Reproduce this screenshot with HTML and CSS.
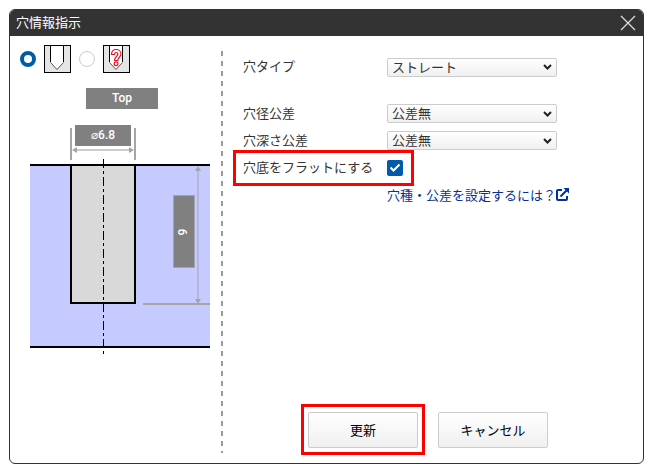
FILE: index.html
```html
<!doctype html>
<html lang="ja">
<head>
  <meta charset="UTF-8">
  <meta name="viewport" content="width=device-width, initial-scale=1.0">
  <title>穴情報指示</title>
  <link rel="stylesheet" href="styles.css">
</head>
<body>
  <div class="dialog" role="dialog" aria-labelledby="dialogTitle">
    <div class="titlebar">
      <span id="dialogTitle">穴情報指示</span>
      <button type="button" class="close" aria-label="閉じる">
        <svg width="16" height="16" viewBox="0 0 16 16"><path d="M1 1L15 15M15 1L1 15" stroke="#ddd" stroke-width="1.3" fill="none"/></svg>
      </button>
    </div>

    <div class="content">
      <div class="preview">
        <div class="shapes">
          <input type="radio" name="shape" id="shapeNormal" class="radio" checked>
          <label for="shapeNormal" aria-label="通常穴">
            <svg width="27" height="28" viewBox="0 0 27 28">
              <rect x="0.5" y="0.5" width="26" height="27" fill="#e5e5e5" stroke="#000"/>
              <path d="M6.5 1V18L13 24.5L19.5 18V1Z" fill="#fff"/>
              <path d="M6.5 1V17M19.5 1V17" stroke="#000" fill="none"/>
              <path d="M6.5 17.5L13 24.5L19.5 17.5" stroke="#555" fill="none"/>
            </svg>
          </label>
          <input type="radio" name="shape" id="shapeUnknown" class="radio">
          <label for="shapeUnknown" aria-label="不明な穴">
            <svg width="27" height="28" viewBox="0 0 27 28">
              <rect x="0.5" y="0.5" width="26" height="27" fill="#e5e5e5" stroke="#000"/>
              <path d="M6.5 1V18L13 24.5L19.5 18V1Z" fill="#fff"/>
              <path d="M6.5 1V17M19.5 1V17" stroke="#000" fill="none"/>
              <path d="M6.5 17.5L13 24.5L19.5 17.5" stroke="#555" fill="none"/>
              <path d="M8.5 9.5C8.500 6.500 10.500 4.500 13.200 4.500C16 4.500 18 6.500 18 9C18 12 14.800 12.500 14.800 15.500H11.500C11.500 11.800 14.800 11.500 14.800 9.200C14.800 6.800 11.500 7 11.500 9.500Z" fill="#fff" stroke="#f01020" stroke-width="1.2"/>
              <circle cx="13.1" cy="18.7" r="1.9" fill="#fff" stroke="#f01020" stroke-width="1.2"/>
            </svg>
          </label>
        </div>

        <svg class="drawing" width="180" height="266" viewBox="0 0 180 266">
          <!-- top label -->
          <rect x="56" y="0" width="72" height="21" fill="#808080"/>
          <text x="92" y="14" class="dim">Top</text>

          <!-- material and hole -->
          <rect x="0" y="77" width="180" height="182" fill="#c5cbff"/>
          <path d="M41 77V215H105V77" fill="#d9d9d9" stroke="#000" stroke-width="2"/>
          <path d="M0 77H180M0 259H180" stroke="#000" stroke-width="2"/>
          <path d="M73.5 71V266" stroke="#000" stroke-dasharray="9 3 3 3"/>

          <!-- diameter -->
          <path d="M41 40V72M105 40V72" stroke="#a5a5a5" stroke-width="2"/>
          <path d="M46 62H100" stroke="#ccc" stroke-width="2"/>
          <path d="M42 62L47 59V65ZM104 62L99 59V65Z" fill="#a5a5a5"/>
          <rect x="45" y="37" width="56" height="21" fill="#808080"/>
          <text x="73" y="51" class="dim">⌀6.8</text>

          <!-- depth -->
          <path d="M168 80V213" stroke="#b4b8d8" stroke-width="2"/>
          <path d="M168 78L165 83H171ZM168 216L165 211H171Z" fill="#a5a5a5"/>
          <path d="M113 216H180" stroke="#a5a5a5" stroke-width="2"/>
          <rect x="143.5" y="107.5" width="21" height="72" fill="#808080" stroke="#a0a2b8"/>
          <text x="-144" y="157" class="dim" transform="rotate(-90)">9</text>
        </svg>
      </div>

      <form class="settings">
        <div class="row row-type">
          <label for="holeType">穴タイプ</label>
          <select id="holeType"><option>ストレート</option></select>
        </div>
        <div class="row">
          <label for="diaTol">穴径公差</label>
          <select id="diaTol"><option>公差無</option></select>
        </div>
        <div class="row">
          <label for="depthTol">穴深さ公差</label>
          <select id="depthTol"><option>公差無</option></select>
        </div>
        <div class="row row-flat">
          <label for="flat">穴底をフラットにする</label>
          <input type="checkbox" id="flat" class="check" checked>
        </div>
        <div class="row row-help">
          <a href="#" class="help">穴種・公差を設定するには？<svg width="13" height="13" viewBox="0 0 13 13"><path d="M6 2H2Q1 2 1 3V11Q1 12 2 12H10Q11 12 11 11V8M4.500 8.500L10.500 2.500" fill="none" stroke="#003399" stroke-width="2"/><path d="M7.500 0H13V5.500Z" fill="#003399"/></svg></a>
        </div>

        <div class="buttons">
          <span class="marked"><button type="button" class="btn">更新</button></span>
          <button type="button" class="btn">キャンセル</button>
        </div>
      </form>
    </div>
  </div>
</body>
</html>
```

FILE: styles.css
```css
html, body{
  margin:0;
  padding:0;
}
body {
  display: flex;
  box-sizing: border-box;
  min-height: 100vh;
  padding: 9px 8px 5px 9px;
  background: #fff;
  color: #333;
  font-family: "Noto Sans CJK JP", sans-serif;
  font-size: 13px;
  line-height: 20px;
}
.dialog {
  flex: 1;
  display: flex;
  flex-direction: column;
  border: 1px solid #333;
  border-radius: 6px;
  overflow: hidden;
}
.titlebar {
  display: flex;
  align-items: center;
  justify-content: space-between;
  height: 26px;
  padding: 0 7px 0 6px;
  background: #333;
  color: #fff;
}
.titlebar span {
  padding-bottom: 2px;
}
.close {
  display: flex;
  padding: 0;
  border: 0;
  background: none;
}
.content {
  flex: 1;
  display: flex;
  padding: 9px 0 10px;
}

/* left side */
.preview {
  width: 211px;
  flex-shrink: 0;
}
.shapes {
  display: flex;
  align-items: center;
  gap: 8px;
  padding-left: 10px;
}
.shapes label {
  display: flex;
}
.radio {
  appearance: none;
  box-sizing: border-box;
  width: 16px;
  height: 16px;
  margin: 0;
  border: 1px solid #ccc;
  border-radius: 50%;
  background: #fff;
}
.radio:checked {
  border: 4px solid #005bac;
}
.drawing {
  display: block;
  margin: 15px 0 0 20px;
}
.dim {
  fill: #fff;
  font-family: Roboto, "DejaVu Sans", sans-serif;
  font-size: 12px;
  font-weight: 500;
  text-anchor: middle;
}

/* right side */
.settings {
  flex: 1;
  display: flex;
  flex-direction: column;
  padding: 6px 0 5px 22px;
  margin-top: 6px;
  background: repeating-linear-gradient(#999 0 5px, transparent 5px 10px) left top / 2px 100% no-repeat;
}
.row {
  display: flex;
  align-items: center;
  height: 27px;
}
.row label {
  width: 144px;
  padding-bottom: 2px;
}
.row-type {
  height: 20px;
  margin-bottom: 23px;
}
.row select {
  appearance: none;
  box-sizing: border-box;
  width: 170px;
  height: 19px;
  padding: 0 20px 2px 4px;
  border: 1px solid #ccc;
  border-radius: 2px;
  background: url('data:image/svg+xml,<svg xmlns="http://www.w3.org/2000/svg" width="9" height="6"><path d="M1 1L4.500 4.500L8 1" fill="none" stroke="%23222" stroke-width="2"/></svg>') right 4px center no-repeat, linear-gradient(#fff, #f0f0f0);
  color: #333;
  font: inherit;
  line-height: 15px;
}
.check {
  appearance: none;
  width: 16px;
  height: 16px;
  margin: 0;
  border: 0;
  border-radius: 2px;
}
.check:checked {
  background: #005bac url('data:image/svg+xml,<svg xmlns="http://www.w3.org/2000/svg" width="16" height="16"><path d="M3.500 7.500L6.500 10.500L12.500 4.500" fill="none" stroke="white" stroke-width="2"/></svg>');
}
.row-flat, .marked {
  position: relative;
}
/* red frames */
.row-flat::after, .marked::after {
  content: "";
  position: absolute;
  border: 3px solid #f00;
  pointer-events: none;
}
.row-flat::after {
  top: -4px;
  left: -10px;
  width: 175px;
  height: 30px;
}
.marked::after {
  inset: -8px -7px -7px;
}
.row-help {
  padding-left: 144px;
}
.help {
  display: flex;
  align-items: center;
  color: #003399;
  text-decoration: none;
}
.buttons {
  display: flex;
  gap: 20px;
  margin-top: auto;
  padding-left: 65px;
}
.marked {
  display: flex;
}
.btn {
  box-sizing: border-box;
  width: 110px;
  height: 36px;
  padding: 0;
  border: 1px solid #ccc;
  border-radius: 2px;
  background: linear-gradient(#fff, #f0f0f0);
  color: #000;
  font: inherit;
}
```
